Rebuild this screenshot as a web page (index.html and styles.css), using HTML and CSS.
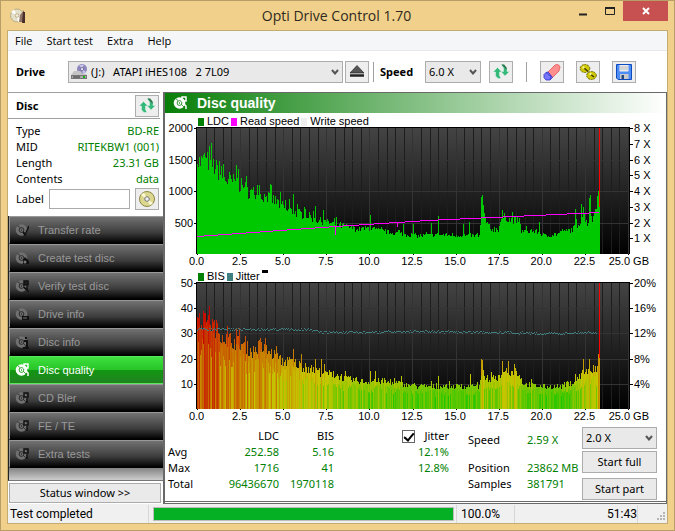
FILE: index.html
```html
<!DOCTYPE html>
<html lang="en">
  <head>
    <meta charset="utf-8">
    <meta name="viewport" content="width=device-width,initial-scale=1.0">
    <title>Opti Drive Control 1.70</title>
    <link rel="stylesheet" href="styles.css">
  </head>
  <body>
    <svg class="defs">
      <defs>
        <symbol id="refresh" viewBox="0 0 18 18">
          <path d="M5.500 4.500L10 9H7.500V12.500L9 15.500H6L3.500 13V9H1Z" fill="#35b97a" stroke="#d5f0e2" stroke-width=".6"/>
          <path d="M13 13L17.500 8.500H15V5L12 1.500H9L11.500 5V8.500H9Z" fill="#35b97a" stroke="#d5f0e2" stroke-width=".6"/>
          <path d="M9.500 1.500H12L14.500 4.500V7L12 4Z" fill="#35704f"/>
        </symbol>
        <symbol id="chevron" viewBox="0 0 8 6"><path d="M1 1L4 4.500L7 1" fill="none" stroke="#555" stroke-width="2"/></symbol>
        <symbol id="disc" viewBox="0 0 14 14">
          <circle cx="6.500" cy="7" r="5.800" fill="currentColor"/>
          <circle cx="6.500" cy="7" r="2.400" fill="none" stroke="var(--hole)" stroke-width=".9"/>
          <circle cx="6.500" cy="7" r=".7" fill="var(--hole)"/>
          <path d="M5 4.500L2.500 2.500M8.500 8.500L11 11" stroke="var(--hole)" stroke-width=".8"/>
        </symbol>
        <linearGradient id="plotbg" x2="0" y2="1"><stop stop-color="#444"/><stop offset="1" stop-color="#000"/></linearGradient>
      </defs>
    </svg>

    <div class="titlebar">
      <svg class="appicon" viewBox="0 0 16 16">
        <circle cx="7" cy="7.500" r="6.500" fill="#e4dfc9" stroke="#bcae88"/>
        <path d="M7 7.500L1 4L4 1.500ZM7 7.500L12 12L8 14Z" fill="#fff"/>
        <circle cx="7" cy="7.500" r="1.800" fill="#f5efd9" stroke="#aa9b75" stroke-width=".7"/>
        <path d="M10 7L14 2V14H9Z" fill="#8d7263"/><path d="M13 4H15V15H12Z" fill="#472c29"/>
      </svg>
      <h1>Opti Drive Control 1.70</h1>
      <div class="winbtns">
        <button aria-label="Minimize"><svg viewBox="0 0 10 10"><path d="M1 8.500H9" stroke="#222" stroke-width="2"/></svg></button>
        <button aria-label="Maximize"><svg viewBox="0 0 10 10"><path d="M.5 1.500H9.500V8.500H.5Z" fill="none" stroke="#222"/><path d="M0 2H10" stroke="#222" stroke-width="2"/></svg></button>
        <button class="close" aria-label="Close"><svg viewBox="0 0 10 10"><path d="M2 2L8 8M8 2L2 8" stroke="#fff" stroke-width="2"/></svg></button>
      </div>
    </div>

    <div class="client">
      <nav class="menubar">
        <a href="#">File</a><a href="#">Start test</a><a href="#">Extra</a><a href="#">Help</a>
      </nav>

      <div class="toolbar">
        <label class="drive-label" for="drive">Drive</label>
        <div class="select drive">
          <svg class="driveicon" viewBox="0 0 16 16">
            <circle cx="11" cy="5" r="5" fill="#8d87bd"/><path d="M11 5L8 1L13 .5ZM11 5L15 8L12 10Z" fill="#c9c5e6"/><circle cx="11" cy="5" r="1.500" fill="#fff" stroke="#57518a" stroke-width=".7"/>
            <path d="M3 7H9L12 10H15L16 11V15H0V11Z" fill="#c4c4c4"/><path d="M0 11H16V15H0Z" fill="#777"/><path d="M1 12H15V14H1Z" fill="#aaa"/><path d="M12 12H14V14H12Z" fill="#16b516"/><path d="M2 13H9" stroke="#333"/>
          </svg>
          <select id="drive"><option>(J:)&nbsp;&nbsp; ATAPI iHES108&nbsp;&nbsp; 2 7L09</option></select>
          <svg class="arrow"><use href="#chevron"/></svg>
        </div>
        <button class="tool eject" aria-label="Eject"><svg viewBox="0 0 18 18"><path d="M9 2.500L16 10H2Z" fill="#555" stroke="#222" stroke-width=".7"/><path d="M2 12.500H16" stroke="#222" stroke-width="2.500"/></svg></button>
        <i class="sep"></i>
        <label class="speed-label" for="speed">Speed</label>
        <div class="select speed">
          <select id="speed"><option>6.0 X</option></select>
          <svg class="arrow"><use href="#chevron"/></svg>
        </div>
        <button class="tool" aria-label="Refresh"><svg><use href="#refresh"/></svg></button>
        <i class="sep wide"></i>
        <button class="tool" aria-label="Erase"><svg viewBox="0 0 18 18">
          <path d="M5 9L12 2Q16 .5 17 4L16 8L9.500 14.500Z" fill="#ff8f8f" stroke="#e35353" stroke-width=".8"/>
          <path d="M5 9L9.500 14.500L7 17H3L1 14.500V11.500L3 9.500Z" fill="#7777fb" stroke="#2d2dcb" stroke-width=".8"/>
          <path d="M3 9.500L5 11.500L8 13L7 17" fill="none" stroke="#2d2dcb" stroke-width=".7"/>
        </svg></button>
        <button class="tool" aria-label="Options"><svg viewBox="0 0 18 18">
          <g fill="#d0c800" stroke="#6b6700">
            <ellipse cx="6" cy="5.500" rx="4.800" ry="4" stroke-dasharray="2 .8"/><ellipse cx="12.500" cy="12.500" rx="4.800" ry="4" stroke-dasharray="2 .8"/>
            <path d="M5 5L9 8.500M11 11L15 14" stroke="#3a3800" stroke-width="1.500"/>
          </g>
          <circle cx="4.500" cy="4.500" r="1.200" fill="#f5f38c"/><circle cx="11.500" cy="11" r="1.200" fill="#f5f38c"/>
        </svg></button>
        <button class="tool" aria-label="Save"><svg viewBox="0 0 18 18">
          <path d="M1.500 1.500H16.500V16.500H3L1.500 15Z" fill="#4d8df5" stroke="#0e4ac0"/>
          <path d="M4.500 2H13.500V8.500H4.500Z" fill="#eee"/><path d="M5 4H13M5 6H13" stroke="#bbb"/><path d="M5 11H13.500V16H5Z" fill="#c9c9c9"/><path d="M6.500 12H9V16H6.500Z" fill="#28467e"/>
        </svg></button>
      </div>

      <div class="main">
        <aside class="sidebar">
          <div class="dischead"><h2>Disc</h2><button class="tool" aria-label="Reload disc"><svg><use href="#refresh"/></svg></button></div>
          <dl class="discinfo">
            <dt>Type</dt><dd>BD-RE</dd>
            <dt>MID</dt><dd>RITEKBW1 (001)</dd>
            <dt>Length</dt><dd>23.31 GB</dd>
            <dt>Contents</dt><dd>data</dd>
          </dl>
          <div class="labelrow">
            <label for="disclabel">Label</label>
            <input id="disclabel" type="text">
            <button class="tool" aria-label="Read label"><svg viewBox="0 0 18 18">
              <circle cx="9" cy="9" r="7.500" fill="#dcd78f" stroke="#8d8745"/><path d="M9 9L3 5L6 2.500ZM9 9L15 13L12 15.500Z" fill="#fbf9d8"/><circle cx="9" cy="9" r="2.300" fill="#eee" stroke="#777"/>
            </svg></button>
          </div>
          <div class="tests">
            <button><svg viewBox="0 0 14 14"><use href="#disc"/><path d="M8 9L10 12L14 3" fill="none" stroke="#111" stroke-width="1.500"/></svg>Transfer rate</button>
            <button><svg viewBox="0 0 14 14"><use href="#disc"/><path d="M10 6L14 10V13H8V9Z" fill="#111"/><circle cx="10" cy="11" r="1.500" fill="#777"/></svg>Create test disc</button>
            <button><svg viewBox="0 0 14 14"><use href="#disc"/><path d="M9 2H13V6H9ZM9 8L14 13M12 7V12" stroke="#111" fill="#222" stroke-width="1.500"/></svg>Verify test disc</button>
            <button><svg viewBox="0 0 14 14"><use href="#disc"/><path d="M7 9H14V13H7Z" fill="#111"/><path d="M8 11H12" stroke="#777"/></svg>Drive info</button>
            <button><svg viewBox="0 0 14 14"><use href="#disc"/><path d="M9 6H12V12M8 13H14M10 3H12" stroke="#111" fill="none" stroke-width="2"/></svg>Disc info</button>
            <button class="active"><svg viewBox="0 0 14 14"><use href="#disc"/><path d="M9 1H13V5H9ZM10 7L13 10V13" stroke="#fff" fill="none" stroke-width="1.500"/></svg>Disc quality</button>
            <button><svg viewBox="0 0 14 14"><use href="#disc"/><path d="M9 2H13V6H9ZM12 7V12" stroke="#111" fill="none" stroke-width="1.500"/></svg>CD Bler</button>
            <button><svg viewBox="0 0 14 14"><use href="#disc"/><path d="M9 2H13V6H9ZM12 7V12" stroke="#111" fill="none" stroke-width="1.500"/></svg>FE / TE</button>
            <button><svg viewBox="0 0 14 14"><use href="#disc"/><path d="M9 2H13V6H9ZM12 7V12" stroke="#111" fill="none" stroke-width="1.500"/></svg>Extra tests</button>
          </div>
          <button class="btn statuswin">Status window &gt;&gt;</button>
        </aside>

        <section class="panel">
          <h2 class="panelhead"><svg viewBox="0 0 14 14"><use href="#disc"/><path d="M9 1H13V5H9ZM10 7L13 10V13" stroke="#fff" fill="none" stroke-width="1.500"/></svg>Disc quality</h2>

          <div class="chart">
            <div class="legend"><i class="ldc"></i>LDC<i class="read"></i>Read speed<i class="write"></i>Write speed</div>
            <div class="yaxis left"><span>2000</span><span>1500</span><span>1000</span><span>500</span></div>
            <svg id="ldc" class="plot" viewBox="0 0 433 126" preserveAspectRatio="none"></svg>
            <div class="yaxis right"><span>8 X</span><span>7 X</span><span>6 X</span><span>5 X</span><span>4 X</span><span>3 X</span><span>2 X</span><span>1 X</span></div>
            <div class="xaxis"><span>0.0</span><span>2.5</span><span>5.0</span><span>7.5</span><span>10.0</span><span>12.5</span><span>15.0</span><span>17.5</span><span>20.0</span><span>22.5</span><span>25.0 GB</span></div>
          </div>

          <div class="chart">
            <div class="legend"><i class="ldc"></i>BIS<i class="jit"></i>Jitter<i class="dash"></i></div>
            <div class="yaxis left"><span>50</span><span>40</span><span>30</span><span>20</span><span>10</span></div>
            <svg id="bis" class="plot" viewBox="0 0 433 126" preserveAspectRatio="none"></svg>
            <div class="yaxis right"><span>20%</span><span>16%</span><span>12%</span><span>8%</span><span>4%</span></div>
            <div class="xaxis"><span>0.0</span><span>2.5</span><span>5.0</span><span>7.5</span><span>10.0</span><span>12.5</span><span>15.0</span><span>17.5</span><span>20.0</span><span>22.5</span><span>25.0 GB</span></div>
          </div>

          <div class="results">
            <table>
              <tr><th></th><th>LDC</th><th>BIS</th><th><div class="jitter"><input type="checkbox" id="jitter" checked><label for="jitter">Jitter</label></div></th></tr>
              <tr><th>Avg</th><td>252.58</td><td>5.16</td><td>12.1%</td></tr>
              <tr><th>Max</th><td>1716</td><td>41</td><td>12.8%</td></tr>
              <tr><th>Total</th><td>96436670</td><td>1970118</td><td></td></tr>
            </table>
            <dl class="progressinfo">
              <dt>Speed</dt><dd>2.59 X</dd>
              <dt>Position</dt><dd>23862 MB</dd>
              <dt>Samples</dt><dd>381791</dd>
            </dl>
            <div class="actions">
              <div class="select">
                <select aria-label="Test speed"><option>2.0 X</option></select>
                <svg class="arrow"><use href="#chevron"/></svg>
              </div>
              <button class="btn">Start full</button>
              <button class="btn part">Start part</button>
            </div>
          </div>
        </section>
      </div>

      <footer class="statusbar">
        <span class="state">Test completed</span>
        <div class="progress"><div class="bar"></div></div>
        <span class="percent">100.0%</span>
        <span class="time">51:43</span>
        <svg class="grip" viewBox="0 0 9 9"><path d="M6 0H8V2H6ZM3 3H5V5H3ZM6 3H8V5H6ZM0 6H2V8H0ZM3 6H5V8H3ZM6 6H8V8H6Z" fill="#b5b5b5"/></svg>
      </footer>
    </div>

    <script src="charts.js"></script>
  </body>
</html>
```
FILE: styles.css
```css
* { box-sizing: border-box; }
body { margin: 0; min-height: 100vh; display: flex; flex-direction: column; padding: 0 7px 7px; background: #f0d08a; border: 1px solid #b79d66; font-family: "Noto Sans", "Open Sans", sans-serif; font-size: 11px; line-height: 16px; color: #000; }
h1, h2, dl, dd { margin: 0; font-size: 11px; }
button, input, select { font: inherit; color: inherit; margin: 0; padding: 0; }
a { color: inherit; text-decoration: none; }
.defs { position: absolute; width: 0; height: 0; }

.titlebar { display: flex; height: 29px; align-items: center; }
.appicon { width: 16px; height: 16px; margin-left: 2px; }
.titlebar h1 { flex: 1; text-align: center; font: 14px/28px "Open Sans", sans-serif; color: #2f2a20; padding-left: 78px; }
.winbtns { display: flex; align-self: flex-start; margin-right: -1px; }
.winbtns button { width: 27px; height: 20px; background: none; border: none; display: flex; align-items: center; justify-content: center; }
.winbtns svg { width: 10px; height: 10px; }
.winbtns .close { width: 45px; background: #c75050; }

.client { flex: 1; display: flex; flex-direction: column; background: #fff; border: 1px solid #c4ab70; margin: 0 -1px -1px; }
.menubar { display: flex; gap: 14px; height: 20px; padding: 0 7px; background: #f5f6f7; border-bottom: 1px solid #e8e8e8; font: 11px/20px "Open Sans", sans-serif; }

.toolbar { display: flex; align-items: center; height: 41px; padding: 1px 31px 0 8px; }
.toolbar label { font-weight: bold; }
.drive-label { width: 52px; }
.speed-label { width: 45px; }
.select { position: relative; height: 22px; }
.select select { appearance: none; width: 100%; height: 22px; padding-left: 3px; background: #e9e9e9; border: 1px solid #acacac; border-radius: 0; display: block; }
.arrow { position: absolute; right: 4px; top: 8px; width: 8px; height: 6px; pointer-events: none; }
.drive { flex: 1; }
.select #drive { padding-left: 22px; }
.driveicon { position: absolute; left: 3px; top: 3px; width: 16px; height: 16px; }
.speed { width: 56px; margin-right: 8px; }
.tool { width: 24px; height: 22px; background: #eee; border: 1px solid #adadad; display: flex; align-items: center; justify-content: center; }
.tool svg { width: 18px; height: 18px; }
.toolbar .tool + .tool { margin-left: 12px; }
.eject { margin-left: 2px; }
.sep { width: 1px; height: 20px; background: #a0a0a0; margin: 0 6px 0 4px; }
.sep.wide { margin: 0 13px; }

.main { flex: 1; display: flex; }
.sidebar { width: 155px; display: flex; flex-direction: column; }
.dischead { display: flex; align-items: center; justify-content: space-between; height: 27px; margin-right: 3px; padding: 0 1px 0 8px; border-top: 1px solid #a0a0a0; border-bottom: 1px solid #a0a0a0; }
.discinfo { display: grid; grid-template-columns: auto 1fr; padding: 4px 4px 0 8px; }
.discinfo dd { text-align: right; }
dd, td { color: #008000; }
.labelrow { display: flex; align-items: center; padding: 1px 4px 6px 8px; }
.labelrow label { width: 33px; }
.labelrow input { width: 81px; height: 20px; border: 1px solid #ababab; margin-right: 5px; }
.tests { flex: 1; background: linear-gradient(#777, #ccc) bottom / 100% 14px no-repeat #222; border-left: 1px solid #222; border-bottom: 1px solid #777; }
.tests button { width: 100%; height: 28px; display: flex; align-items: center; gap: 9px; padding-left: 5px; border: none; border-top: 1px solid #999; border-left: 1px solid #999; border-bottom: 1px solid #000; background: linear-gradient(#727272, #3c3c3c 60%, #000); color: #999; font: 11px/14px "Liberation Sans", sans-serif; --hole: #222; }
.tests svg { width: 14px; height: 14px; color: #707070; }
.tests .active { background: linear-gradient(#3fe03f, #27c427 50%, #129512 52%, #218321); border-color: #58e758; color: #fff; --hole: #139513; }
.tests .active svg { color: #fff; }
.btn { background: #eaeaea; border: 1px solid #acacac; height: 22px; }
.statuswin { height: 20px; margin: 2px 2px 1px 1px; }

.panel { flex: 1; border: 1px solid #696969; border-left-width: 2px; }
.panelhead { display: flex; align-items: center; gap: 10px; height: 20px; padding-left: 8px; background: linear-gradient(90deg, #087f08, #fff); color: #fff; font: bold 14px/20px "Liberation Sans", sans-serif; --hole: #108510; }
.panelhead svg { width: 14px; height: 14px; }
.chart { display: grid; grid-template-columns: 32px 1fr 36px; padding-top: 2px; font: 11px/13px "Liberation Sans", sans-serif; }
.legend { grid-column: 1 / 4; padding-left: 32px; display: flex; align-items: center; }
.legend i { width: 6px; height: 8px; margin: 0 3px 0 2px; }
.legend .ldc { background: #008000; margin-left: 1px; }
.legend .read { background: #f0f; }
.legend .write { background: #eee; }
.legend .jit { background: #408080; }
.legend .dash { background: #000; height: 3px; align-self: flex-start; }
.plot { width: 100%; height: 126px; display: block; overflow: visible; shape-rendering: crispEdges; }
.yaxis { display: flex; flex-direction: column; line-height: 0; }
.yaxis span { flex: 1; }
.left { text-align: right; padding-right: 4px; }
.right { padding-left: 4px; }
.xaxis { grid-column: 1 / 4; display: grid; grid-template-columns: repeat(11, 1fr); padding: 1px 17px 0 10px; text-align: center; }
.xaxis span:last-child { text-align: right; white-space: nowrap; }

.results { display: flex; gap: 19px; height: 79px; padding: 5px 9px 0 3px; border-bottom: 1px solid #696969; }
table { border-collapse: collapse; table-layout: fixed; width: 281px; height: 64px; }
th, td { height: 16px; padding: 0; text-align: right; font-weight: normal; }
th:first-child { width: 31px; text-align: left; }
th:nth-child(2) { width: 80px; }
th:nth-child(3) { width: 55px; }
.jitter { display: flex; align-items: center; justify-content: flex-end; gap: 9px; height: 16px; }
.jitter input { appearance: none; width: 13px; height: 13px; border: 1px solid #666; background: #fff; display: flex; align-items: center; justify-content: center; }
.jitter input:checked::after { content: ""; width: 4px; height: 8px; border: solid #000; border-width: 0 2px 2px 0; transform: rotate(40deg); }
.progressinfo { flex: 1; display: grid; grid-template: 28px 16px 16px / 59px auto; align-content: start; padding-top: 4px; white-space: nowrap; margin-right: -19px; }
.actions { width: 75px; margin-top: -1px; }
.actions .btn { width: 75px; margin-top: 2px; display: block; }
.actions .part { margin-top: 5px; }

.statusbar { display: flex; align-items: center; height: 19px; background: #f0f0f0; font: 12px/18px "Roboto", sans-serif; padding-left: 2px; }
.state { width: 139px; border-right: 1px solid #d7d7d7; }
.progress { flex: 1; height: 14px; margin: 0 2px 0 4px; border: 1px solid #bcbcbc; background: #e6e6e6; }
.bar { width: 100%; height: 100%; background: #06b025; }
.percent { width: 59px; padding-left: 4px; border: solid #d7d7d7; border-width: 0 1px; }
.time { width: 123px; text-align: right; border-right: 1px solid #d7d7d7; }
.grip { width: 9px; height: 9px; margin: 5px 1px 0 19px; }
```
FILE: charts.js
```js
// peaks: [x, value], x is the plot position (0 - 402)
var ldcLine = [[0,1470],[12,1480],[20,1350],[30,1170],[40,1140],[50,1010],[60,960],[72,900],[80,830],[90,700],[100,660],[110,620],[120,540],[130,510],[145,450],[160,390],[172,420],[182,370],[200,330],[220,290],[240,310],[282,290],[285,800],[289,500],[292,400],[301,400],[304,570],[308,600],[313,540],[322,540],[324,370],[340,360],[348,290],[362,330],[376,400],[382,500],[386,650],[390,500],[396,580],[400,900],[402,900]];
var ldcPeaks = [[7,1600],[12,1716],[22,1480],[32,1300],[39,1410],[41,1350],[48,1150],[62,1090],[74,1100],[92,870],[96,950],[107,750],[118,760],[126,700],[173,620],[206,480],[216,470],[234,490],[241,600],[266,480],[272,500],[284,900],[305,700],[315,660],[342,500],[378,710],[384,790],[386,750],[392,890],[393,930],[401,1000]];
var bisLine = [[0,35],[14,34],[22,31],[30,28],[45,26],[55,23],[62,25],[75,22],[85,19],[95,19],[105,17],[120,15],[135,14],[150,12],[165,11],[185,11],[205,10],[220,9],[240,9],[282,9],[285,18],[289,11],[302,13],[306,16],[322,14],[326,10],[345,9],[365,9],[378,11],[386,15],[392,14],[399,16],[402,20]];
var bisPeaks = [[6,39],[8,38],[12,41],[20,34],[30,33],[39,32],[42,32],[48,29],[63,28],[79,25],[96,24],[104,22],[118,20],[124,20],[173,15],[178,15],[204,13],[241,13],[273,14],[284,20],[305,19],[311,19],[317,18],[378,14],[386,20],[392,20],[401,22]];

var seed = 7;
function rnd() {
  seed = (seed * 16807) % 2147483647;
  return seed / 2147483647;
}

function valueAt(line, x) {
  for (var i = 1; i < line.length; i++) {
    if (x <= line[i][0]) {
      var a = line[i - 1], b = line[i];
      return a[1] + (b[1] - a[1]) * (x - a[0]) / (b[0] - a[0]);
    }
  }
  return line[line.length - 1][1];
}

function values(line, peaks) {
  var v = [];
  for (var x = 0; x < 403; x++) {
    v[x] = valueAt(line, x) * (0.87 + rnd() * 0.24);
    if (rnd() > 0.9) v[x] *= 1.12;
  }
  peaks.forEach(function (p) { v[p[0]] = p[1]; });
  return v;
}

function rect(x, y, w, h, fill) {
  return `<rect x="${x}" y="${y}" width="${w}" height="${h}" fill="${fill}"/>`;
}

function grid(rows, ticks) {
  var s = rect(0, 0, 433, 126, "url(#plotbg)");
  for (var i = 1; i <= 50; i++) {
    s += rect(Math.round(i * 8.62), 0, 1, 126, i % 5 ? "#1d1d1d" : "#333");
  }
  for (i = 0; i < rows; i++) {
    var y = Math.round(i * 126 / rows);
    if (i) s += rect(0, y, 433, 1, "#333");
    s += rect(-3, y, 3, 1, "#000");
  }
  for (i = 0; i < ticks; i++) s += rect(433, Math.round(i * 126 / ticks), 3, 1, "#000");
  for (i = 0; i <= 10; i++) s += rect(Math.round(i * 43.1), 126, 1, 1, "#000");
  return s + rect(-1, -1, 434, 1, "#000") + rect(-1, 0, 1, 126, "#000") + rect(432, 0, 1, 126, "#000");
}

function bars(v, max, fill) {
  var s = "";
  v.forEach(function (n, x) {
    var h = Math.round(n / max * 126);
    s += rect(x, 126 - h, 1, h, typeof fill == "string" ? fill : fill(n));
  });
  return s;
}

function bisColor(n) {
  var hue = valueAt([[0,125],[5,112],[8,92],[11,72],[15,58],[20,46],[26,32],[34,12],[41,0]], n);
  return `hsl(${Math.round(hue)},100%,39%)`;
}

// LDC and read speed
var s = grid(4, 8) + bars(values(ldcLine, ldcPeaks), 2000, "#00c800");
for (var x = 0; x < 402; x++) {
  var y = Math.round(valueAt([[0,108],[138,98],[230,92],[402,84]], x));
  s += rect(x, y, 1, 1, "#f0f");
}
s += rect(138, 98, 1, 9, "#f0f") + rect(200, 94, 1, 5, "#f0f");
s += rect(402, 0, 1, 79, "#f00");
document.getElementById("ldc").innerHTML = s;

// BIS and jitter
var bis = values(bisLine, bisPeaks);
var low = bis.map(function (n) { return n * (0.6 + rnd() * 0.4); });
s = grid(5, 5) + bars(bis, 50, bisColor) + bars(low, 50, bisColor);
for (x = 0; x < 400; x++) {
  var mid = valueAt([[0,46],[110,46],[126,49],[180,49],[205,48],[300,49],[345,50],[365,50],[385,49],[400,49]], x);
  s += rect(x, Math.round(mid + rnd() * 2.4 - 1.2), 1, 1, "#408080");
}
s += rect(402, 0, 1, 75, "#f00");
document.getElementById("bis").innerHTML = s;
```
